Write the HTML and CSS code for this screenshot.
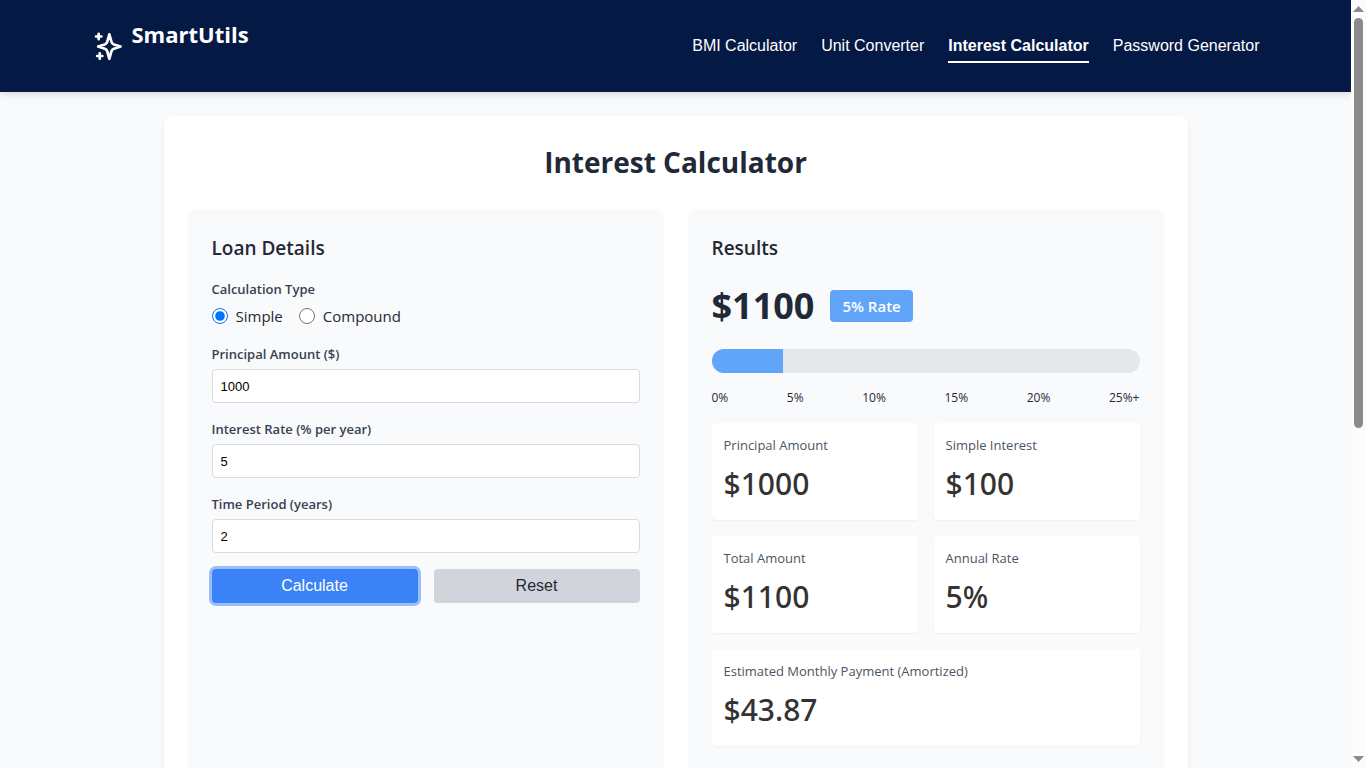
FILE: index.html
```html
<!DOCTYPE html>
<html lang="en">
<head>
<meta charset="utf-8">
<meta name="viewport" content="width=device-width, initial-scale=1">
<title>SmartUtils - Interest Calculator</title>
<link rel="stylesheet" href="styles.css">
</head>
<body>
<div class="viewport">
  <div class="page">
    <header class="header">
      <div class="header-inner">
        <div class="brand">
          <svg class="brand-icon" viewBox="0 0 24 24" fill="none" stroke="currentColor" stroke-width="2" stroke-linecap="round" stroke-linejoin="round" aria-hidden="true">
            <path d="M13 3.2L14.6 8.9Q15 10.3 16.4 10.8L21.4 12.4L16.4 14Q15 14.5 14.6 15.9L13 21.6L11.4 15.9Q11 14.5 9.6 14L4.6 12.4L9.6 10.8Q11 10.3 11.4 8.9Z"/>
            <path d="M5 2.9v4M3 4.9h4M5.8 17.5v4M3.8 19.5h4"/>
          </svg>
          <h1 class="brand-name">SmartUtils</h1>
        </div>
        <nav class="nav">
          <a class="nav-link" href="#bmi">BMI Calculator</a>
          <a class="nav-link" href="#unit">Unit Converter</a>
          <a class="nav-link nav-link-active" href="#interest" aria-current="page">Interest Calculator</a>
          <a class="nav-link" href="#password">Password Generator</a>
        </nav>
      </div>
    </header>
    <main class="card">
      <h2 class="card-title">Interest Calculator</h2>
      <div class="panels">
        <section class="panel">
          <h3 class="panel-title">Loan Details</h3>
          <form class="form">
            <fieldset class="field">
              <legend class="label">Calculation Type</legend>
              <div class="radios">
                <label class="radio"><input type="radio" name="type" checked>Simple</label>
                <label class="radio"><input type="radio" name="type">Compound</label>
              </div>
            </fieldset>
            <div class="field">
              <label class="label" for="principal">Principal Amount ($)</label>
              <input class="input" id="principal" type="text" inputmode="decimal" value="1000">
            </div>
            <div class="field">
              <label class="label" for="rate">Interest Rate (% per year)</label>
              <input class="input" id="rate" type="text" inputmode="decimal" value="5">
            </div>
            <div class="field">
              <label class="label" for="time">Time Period (years)</label>
              <input class="input" id="time" type="text" inputmode="decimal" value="2">
            </div>
            <div class="actions">
              <button class="button button-primary" type="button">Calculate</button>
              <button class="button button-secondary" type="reset">Reset</button>
            </div>
          </form>
        </section>
        <section class="panel">
          <h3 class="panel-title">Results</h3>
          <div class="total">
            <span class="total-value">$1100</span>
            <span class="badge">5% Rate</span>
          </div>
          <div class="meter"><div class="meter-fill" style="width: 16.67%"></div></div>
          <div class="scale">
            <span>0%</span><span>5%</span><span>10%</span><span>15%</span><span>20%</span><span>25%+</span>
          </div>
          <div class="stats">
            <div class="stat"><p class="stat-label">Principal Amount</p><p class="stat-value">$1000</p></div>
            <div class="stat"><p class="stat-label">Simple Interest</p><p class="stat-value">$100</p></div>
            <div class="stat"><p class="stat-label">Total Amount</p><p class="stat-value">$1100</p></div>
            <div class="stat"><p class="stat-label">Annual Rate</p><p class="stat-value">5%</p></div>
            <div class="stat stat-wide"><p class="stat-label">Estimated Monthly Payment (Amortized)</p><p class="stat-value">$43.87</p></div>
          </div>
        </section>
      </div>
    </main>
  </div>
  <div class="scrollbar" aria-hidden="true">
    <svg class="scroll-arrow" viewBox="0 0 11 6"><path d="M5.5 0L11 6H0z"/></svg>
    <div class="scroll-track"><div class="scroll-thumb"></div></div>
    <svg class="scroll-arrow" viewBox="0 0 11 6"><path d="M0 0H11L5.5 6z"/></svg>
  </div>
</div>
</body>
</html>
```
FILE: styles.css
```css
* {
  box-sizing: border-box;
  margin: 0;
  padding: 0;
}

body {
  font-family: "Segoe UI", "Open Sans", "Noto Sans", sans-serif;
  font-size: 15px;
  line-height: 24px;
  color: #1f2937;
  background: #f9fafb;
}

.viewport {
  display: grid;
  grid-template-columns: minmax(0, 1fr) 15px;
  height: 100vh;
}

.page {
  overflow: hidden;
}

.header {
  padding: 16px 0;
  background: #051945;
  color: #fff;
  box-shadow: 0 2px 8px rgba(0, 0, 0, 0.15);
}

.header-inner {
  display: flex;
  align-items: center;
  justify-content: space-between;
  max-width: 1200px;
  margin: 0 auto;
  padding: 0 16px;
}

.brand {
  display: flex;
  align-items: center;
  gap: 8px;
}

.brand-icon {
  width: 32px;
  height: 32px;
}

.brand-name {
  margin-bottom: 24px;
  font-size: 22px;
  font-weight: 700;
  line-height: 36px;
}

.nav {
  display: flex;
  gap: 24px;
}

.nav-link {
  border: solid transparent;
  border-width: 2px 0;
  font-family: Arial, "Liberation Sans", sans-serif;
  font-size: 16px;
  line-height: 30px;
  color: #fff;
  text-decoration: none;
}

.nav-link-active {
  border-bottom-color: #fff;
  font-weight: 700;
}

.card {
  max-width: 1024px;
  margin: 24px auto;
  padding: 24px;
  border-radius: 8px;
  background: #fff;
  box-shadow: 0 4px 6px rgba(0, 0, 0, 0.06);
}

.card-title {
  margin-bottom: 24px;
  font-size: 28px;
  font-weight: 700;
  line-height: 45px;
  text-align: center;
}

.panels {
  display: grid;
  grid-template-columns: repeat(auto-fit, minmax(360px, 1fr));
  gap: 24px;
}

.panel {
  padding: 24px 24px 64px;
  border-radius: 8px;
  background: #f9fafb;
}

.panel-title {
  margin-bottom: 16px;
  font-size: 19px;
  font-weight: 600;
  line-height: 30px;
}

.field {
  margin-bottom: 16px;
  border: 0;
}

.label {
  display: block;
  margin-bottom: 4px;
  font-size: 13px;
  font-weight: 600;
  line-height: 21px;
  color: #374151;
}

.radios {
  display: flex;
  gap: 16px;
}

.radio {
  display: flex;
  align-items: center;
  gap: 8px;
}

.radio input {
  width: 16px;
  height: 16px;
}

.input {
  display: block;
  width: 100%;
  height: 34px;
  padding: 0 8px;
  border: 1px solid #d8dbe0;
  border-radius: 4px;
  background: #fff;
  font-family: Arial, "Liberation Sans", sans-serif;
  font-size: 13px;
  color: #000;
}

.actions {
  display: flex;
  gap: 16px;
}

.button {
  flex: 1;
  height: 34px;
  border: 0;
  border-radius: 4px;
  font-family: Arial, "Liberation Sans", sans-serif;
  font-size: 16px;
}

.button-primary {
  background: #3b82f6;
  box-shadow: 0 0 0 3px rgba(59, 130, 246, 0.5);
  color: #fff;
}

.button-secondary {
  background: #d1d5db;
  color: #1f2937;
}

.total {
  display: flex;
  align-items: center;
  gap: 16px;
  margin-bottom: 16px;
}

.total-value {
  font-size: 36px;
  font-weight: 700;
  line-height: 54px;
}

.badge {
  padding: 4px 12px;
  border-radius: 4px;
  background: #60a5fa;
  font-size: 15px;
  font-weight: 600;
  color: #fff;
}

.meter {
  height: 24px;
  margin-bottom: 16px;
  overflow: hidden;
  border-radius: 12px;
  background: #e5e7eb;
}

.meter-fill {
  height: 100%;
  background: #60a5fa;
}

.scale {
  display: flex;
  justify-content: space-between;
  margin-bottom: 16px;
  font-size: 12px;
  line-height: 18px;
}

.stats {
  display: grid;
  grid-template-columns: 1fr 1fr;
  gap: 16px;
}

.stat {
  padding: 12px;
  border-radius: 4px;
  background: #fff;
  box-shadow: 0 1px 2px rgba(0, 0, 0, 0.05);
}

.stat-wide {
  grid-column: 1 / -1;
}

.stat-label {
  margin-bottom: 4px;
  font-size: 13px;
  line-height: 21px;
  color: #4b5563;
}

.stat-value {
  font-family: "Segoe UI", "Noto Sans", "Open Sans", sans-serif;
  font-size: 30px;
  font-weight: 500;
  line-height: 48px;
  color: #333;
}

.scrollbar {
  display: flex;
  flex-direction: column;
  align-items: center;
  gap: 6px;
  padding: 6px 0;
  background: #fcfcfc;
}

.scroll-arrow {
  width: 11px;
  height: 6px;
  fill: #8b8b8b;
}

.scroll-track {
  flex: 1;
}

.scroll-thumb {
  width: 9px;
  height: 56%;
  border-radius: 5px;
  background: #8b8b8b;
}
```
